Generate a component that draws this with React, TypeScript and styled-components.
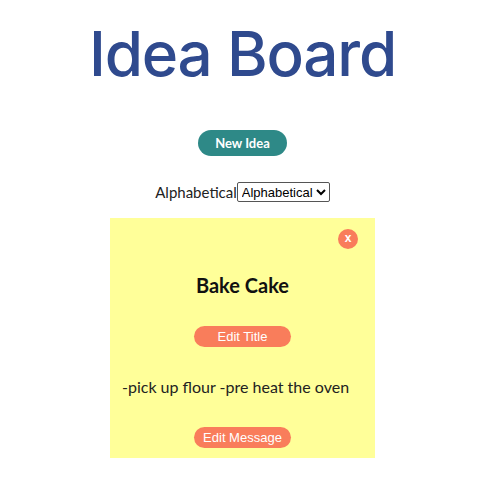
import React from 'react';
import styled, {createGlobalStyle} from "styled-components";

const GlobalStyle = createGlobalStyle`
    body {
        margin: 0;
        background: #ffffff;
        font-family: 'Lato', 'Open Sans', sans-serif;
    }
`

export default function App() {
    return (
        <Page>
            <GlobalStyle/>
            <Title>Idea Board</Title>
            <NewButton>New Idea</NewButton>
            <SortRow>
                <SortLabel>Alphabetical</SortLabel>
                <SortSelect defaultValue="alpha">
                    <option value="alpha">Alphabetical</option>
                    <option value="date">Date</option>
                </SortSelect>
            </SortRow>
            <Card>
                <CloseButton>x</CloseButton>
                <CardTitle>Bake Cake</CardTitle>
                <EditButton>Edit Title</EditButton>
                <Message>-pick up flour -pre heat the oven</Message>
                <EditButton>Edit Message</EditButton>
            </Card>
        </Page>
    );
}

const Page = styled.div`
    width: 485px;
    display: flex;
    flex-direction: column;
    align-items: center;
    padding-top: 22px;
`

const Title = styled.h1`
    font-family: 'Inter', sans-serif;
    font-weight: 500;
    font-size: 62px;
    line-height: 64px;
    color: #2f4a8e;
    margin: 0 0 44px;
    letter-spacing: -1.2px;
`

const NewButton = styled.button`
    width: 89px;
    height: 26px;
    border: none;
    border-radius: 13px;
    background: #2e8987;
    color: #ffffff;
    font-family: 'Lato', sans-serif;
    font-weight: 700;
    font-size: 13px;
    padding: 0;
`

const SortRow = styled.div`
    display: flex;
    align-items: center;
    margin-top: 26px;
`

const SortLabel = styled.span`
    font-family: 'Lato', sans-serif;
    font-size: 15px;
    color: #222;
`

const SortSelect = styled.select`
    font-family: 'Liberation Sans', Arial, sans-serif;
    font-size: 13px;
    height: 20px;
    border: 1px solid #555;
    border-radius: 2px;
    background: #fff;
    color: #000;
    padding: 0;
`

const Card = styled.div`
    position: relative;
    width: 265px;
    height: 240px;
    margin-top: 16px;
    background: #ffff99;
    display: flex;
    flex-direction: column;
    align-items: center;
    box-sizing: border-box;
    padding-top: 55px;
`

const CloseButton = styled.button`
    position: absolute;
    top: 11px;
    right: 17px;
    width: 20px;
    height: 20px;
    border-radius: 50%;
    border: none;
    background: #f97d5b;
    color: #fff;
    font-family: 'Liberation Sans', Arial, sans-serif;
    font-size: 12px;
    font-weight: 700;
    padding: 0 0 2px;
`

const CardTitle = styled.h2`
    font-family: 'Lato', sans-serif;
    font-weight: 700;
    font-size: 20px;
    line-height: 24px;
    margin: 0 0 29px;
    color: #111;
`

const EditButton = styled.button`
    width: 97px;
    height: 21px;
    border: none;
    border-radius: 11px;
    background: #f97d5b;
    color: #fff;
    font-family: 'Liberation Sans', Arial, sans-serif;
    font-size: 13px;
    padding: 0;
`

const Message = styled.p`
    align-self: stretch;
    margin: 30px 0 30px;
    padding-left: 12px;
    font-family: 'Lato', sans-serif;
    font-size: 16px;
    line-height: 20px;
    color: #222;
`
